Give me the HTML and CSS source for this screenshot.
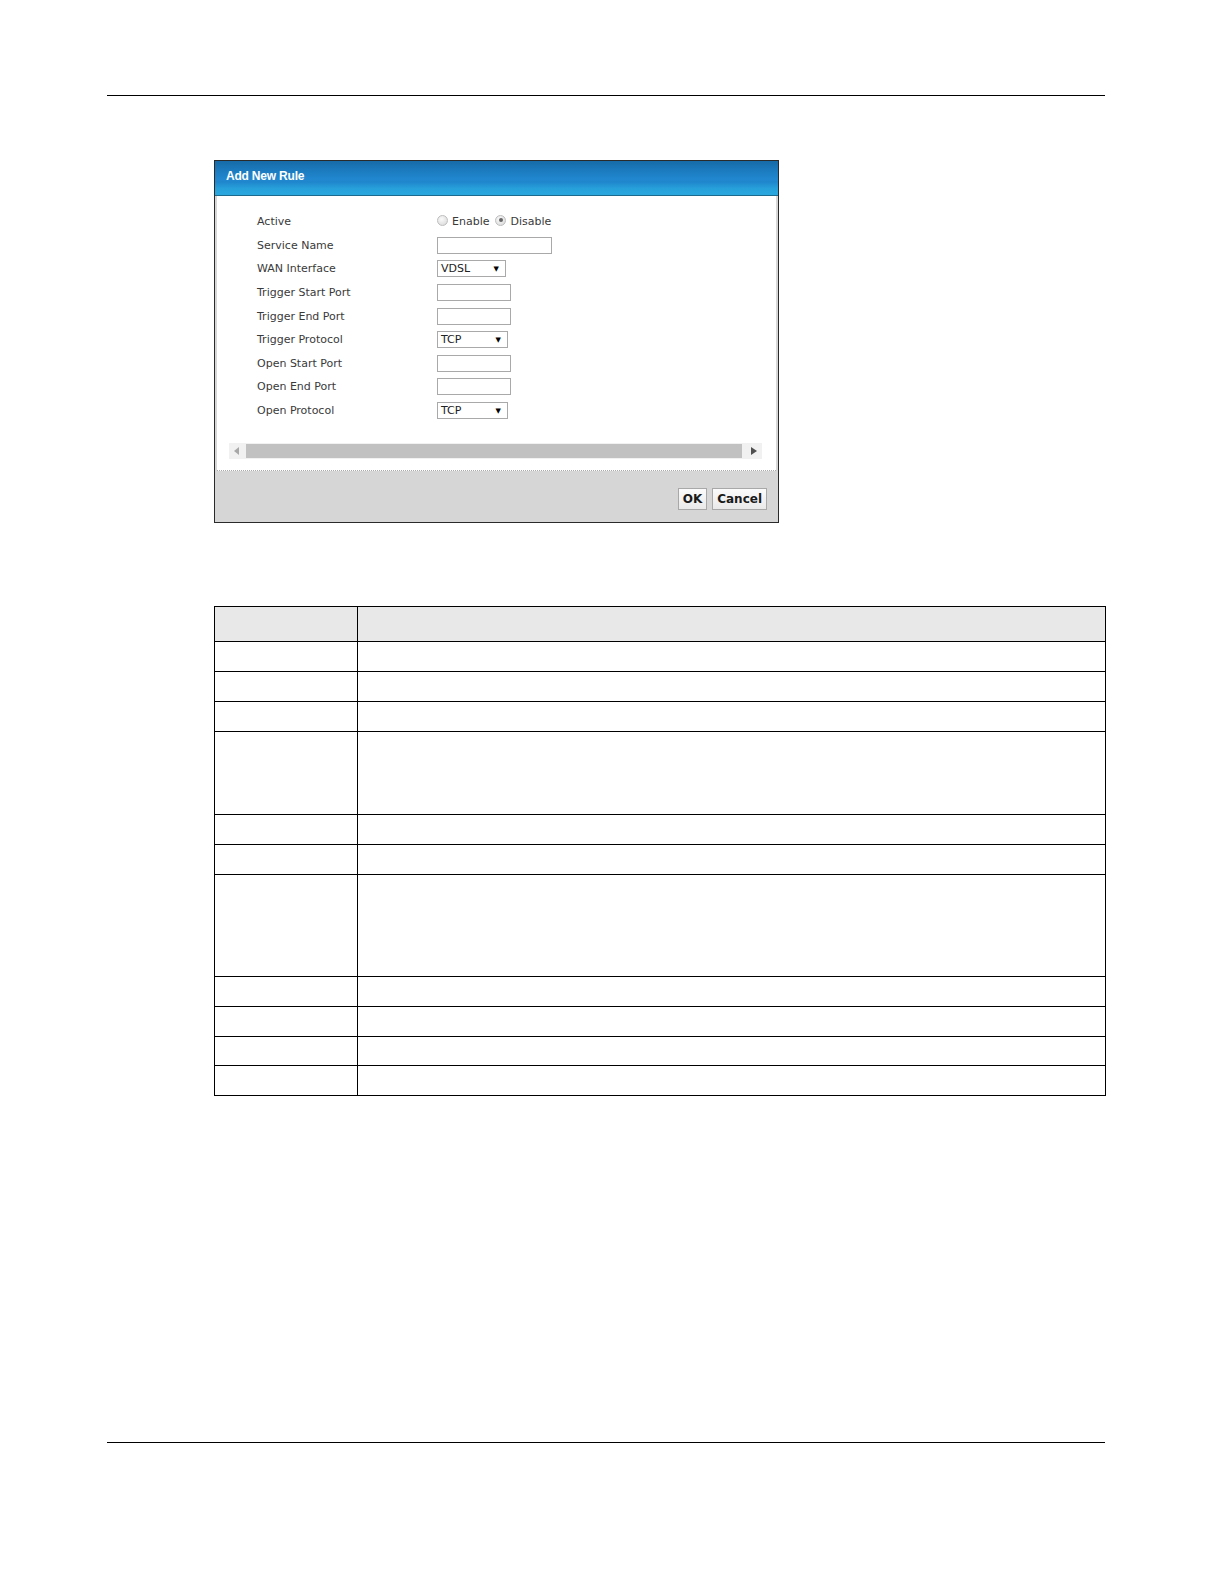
FILE: index.html
```html
<!DOCTYPE html>
<html>
<head>
<meta charset="utf-8">
<link rel="stylesheet" href="styles.css">
</head>
<body>
<div class="page">
  <div class="rule rule-top"></div>

  <div class="dialog">
    <div class="dlg-head">Add New Rule</div>
    <div class="dlg-body">
      <div class="form">
        <div class="lbl">Active</div>
        <div class="ctl radios">
          <span class="radio"></span><span class="rtext">Enable</span>
          <span class="radio on"></span><span class="rtext">Disable</span>
        </div>

        <div class="lbl">Service Name</div>
        <div class="ctl"><span class="input w114"></span></div>

        <div class="lbl">WAN Interface</div>
        <div class="ctl"><span class="select w68"><span class="sv">VDSL</span><span class="arr">&#9660;</span></span></div>

        <div class="lbl">Trigger Start Port</div>
        <div class="ctl"><span class="input w74"></span></div>

        <div class="lbl">Trigger End Port</div>
        <div class="ctl"><span class="input w74"></span></div>

        <div class="lbl">Trigger Protocol</div>
        <div class="ctl"><span class="select w71"><span class="sv">TCP</span><span class="arr">&#9660;</span></span></div>

        <div class="lbl">Open Start Port</div>
        <div class="ctl"><span class="input w74"></span></div>

        <div class="lbl">Open End Port</div>
        <div class="ctl"><span class="input w74"></span></div>

        <div class="lbl">Open Protocol</div>
        <div class="ctl"><span class="select w71"><span class="sv">TCP</span><span class="arr">&#9660;</span></span></div>
      </div>

      <div class="hscroll">
        <span class="sbtn"><svg width="6" height="8" viewBox="0 0 6 8"><path d="M5 0 L0 4 L5 8 Z" fill="#a8a8a8"/></svg></span>
        <span class="thumb"></span>
        <span class="sbtn"><svg width="6" height="8" viewBox="0 0 6 8"><path d="M0 0 L6 4 L0 8 Z" fill="#505050"/></svg></span>
      </div>
    </div>
    <div class="dlg-foot">
      <span class="btn">OK</span>
      <span class="btn">Cancel</span>
    </div>
  </div>

  <table class="desc">
    <tr class="th"><td class="c1"></td><td></td></tr>
    <tr class="r30"><td class="c1"></td><td></td></tr>
    <tr class="r30"><td class="c1"></td><td></td></tr>
    <tr class="r30"><td class="c1"></td><td></td></tr>
    <tr class="r83"><td class="c1"></td><td></td></tr>
    <tr class="r30"><td class="c1"></td><td></td></tr>
    <tr class="r30"><td class="c1"></td><td></td></tr>
    <tr class="r102"><td class="c1"></td><td></td></tr>
    <tr class="r30"><td class="c1"></td><td></td></tr>
    <tr class="r30"><td class="c1"></td><td></td></tr>
    <tr class="r29"><td class="c1"></td><td></td></tr>
    <tr class="r30"><td class="c1"></td><td></td></tr>
  </table>

  <div class="rule rule-bottom"></div>
</div>
</body>
</html>
```

FILE: styles.css
```css
html, body {
  margin: 0;
  padding: 0;
  background: #fff;
}
.page {
  padding-top: 95px;
  padding-bottom: 20px;
  font-family: "DejaVu Sans", sans-serif;
}
.rule {
  height: 1px;
  background: #000;
  margin-left: 107px;
  width: 998px;
}
.rule-bottom {
  margin-top: 346px;
}

/* dialog */
.dialog {
  margin-top: 64px;
  margin-left: 214px;
  width: 563px;
  height: 361px;
  border: 1px solid #2a2a2a;
  display: flex;
  flex-direction: column;
  background: #d6d6d6;
}
.dlg-head {
  height: 35px;
  border-bottom: 1px solid #1c6a8e;
  background: linear-gradient(to bottom, #176aa7 0%, #1c7cc0 30%, #2188d0 55%, #1f86cc 62%, #27a0da 80%, #2aa8de 100%);
  color: #fff;
  font-family: "Liberation Sans", sans-serif;
  font-weight: bold;
  font-size: 12px;
  letter-spacing: -0.2px;
  line-height: 30px;
  padding-left: 11px;
  box-sizing: border-box;
}
.dlg-body {
  background: #fff;
  margin: 0 2px 0 2px;
  height: 275px;
  box-sizing: border-box;
  padding-top: 14px;
  border-bottom: 1px dotted #aaa;
}
.form {
  display: grid;
  grid-template-columns: 180px auto;
  grid-auto-rows: 23.6px;
  padding-left: 40px;
  font-size: 11px;
  color: #3a3a3a;
}
.lbl, .ctl {
  display: flex;
  align-items: center;
}
.radio {
  width: 11px;
  height: 11px;
  border-radius: 50%;
  border: 1px solid #bdbdbd;
  background: radial-gradient(circle at 40% 35%, #fafafa, #d6d6d6);
  box-sizing: border-box;
  margin-right: 4px;
  margin-top: -3px;
  position: relative;
}
.radio.on::after {
  content: "";
  position: absolute;
  left: 2.5px;
  top: 2.5px;
  width: 4px;
  height: 4px;
  border-radius: 50%;
  background: #666;
}
.rtext {
  margin-right: 6px;
}
.input, .select {
  display: inline-flex;
  align-items: center;
  height: 17px;
  border: 1px solid #a9a9a9;
  box-sizing: border-box;
  background: #fff;
}
.w114 { width: 115px; }
.w74 { width: 74px; }
.w68 { width: 69px; }
.w71 { width: 71px; }
.select {
  justify-content: space-between;
  padding: 0 6px 0 3px;
  font-size: 11px;
  color: #222;
}
.arr {
  font-size: 7px;
  color: #000;
}
.hscroll {
  margin: 21px 14px 0 12px;
  height: 16px;
  display: flex;
  align-items: center;
  background: #f1f1f1;
}
.sbtn {
  width: 16px;
  height: 16px;
  display: flex;
  align-items: center;
  justify-content: center;
  flex: none;
}
.thumb {
  flex: 1;
  height: 14px;
  background: #c1c1c1;
  margin: 0 4px 0 1px;
}
.dlg-foot {
  flex: 1;
  display: flex;
  justify-content: flex-end;
  align-items: center;
  gap: 5px;
  padding-right: 11px;
  padding-top: 4px;
}
.btn {
  display: inline-flex;
  align-items: center;
  justify-content: center;
  height: 22px;
  padding: 0 4px;
  min-width: 18px;
  box-sizing: border-box;
  border: 1px solid #a8a8a8;
  background: linear-gradient(#fbfbfb, #e9e9e9);
  font-family: "DejaVu Sans", sans-serif;
  font-weight: bold;
  font-size: 12px;
  color: #1a1a1a;
}

/* description table */
.desc {
  margin-top: 83px;
  margin-left: 214px;
  width: 892px;
  border-collapse: collapse;
}
.desc td {
  border: 1.5px solid #000;
  padding: 0;
}
.desc .c1 {
  width: 142px;
}
.desc .th td {
  background: #e8e8e8;
  height: 34px;
}
.r30 td { height: 29px; }
.r29 td { height: 28px; }
.r83 td { height: 82px; }
.r102 td { height: 101px; }
```
